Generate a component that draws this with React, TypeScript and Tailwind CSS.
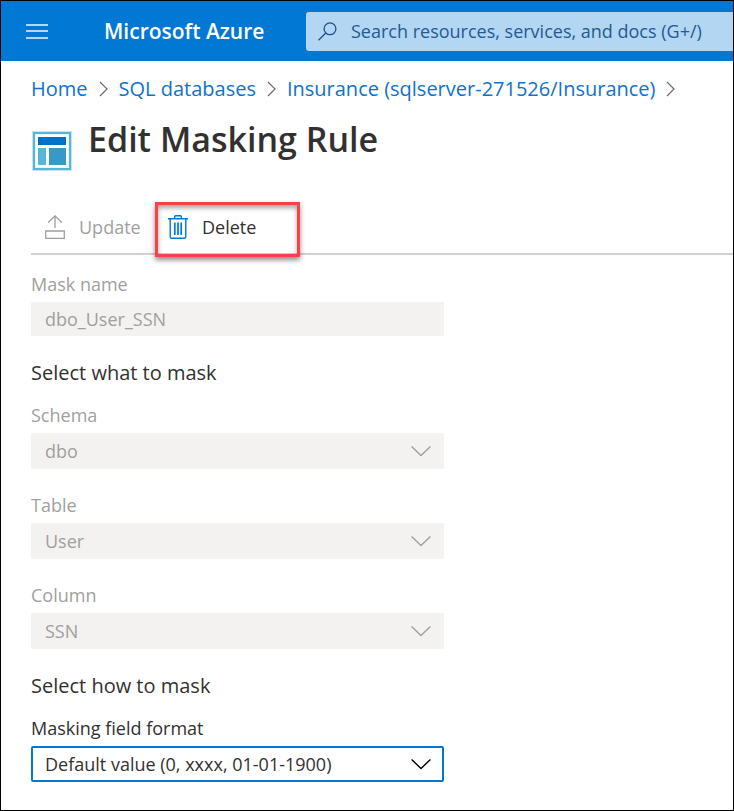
import type { ReactNode } from "react";

function ChevronRight() {
  return (
    <svg className="h-4 w-[9px] shrink-0" viewBox="0 0 9 16" fill="none" stroke="#6b6b6b" strokeWidth="1.2" aria-hidden="true">
      <path d="M1 1l7 7-7 7" />
    </svg>
  );
}

function ChevronDown() {
  return (
    <svg
      className="pointer-events-none absolute top-1/2 right-[13px] h-[11px] w-5 -translate-y-1/2"
      viewBox="0 0 20 11"
      fill="none"
      stroke="currentColor"
      strokeWidth="1.4"
      aria-hidden="true"
    >
      <path d="M.6 1l9.4 9 9.4-9" />
    </svg>
  );
}

function ResourceIcon() {
  return (
    <svg className="mt-3 h-10 w-10 shrink-0" viewBox="0 0 40 40" aria-hidden="true">
      <rect width="40" height="40" fill="#c5e3f1" />
      <rect x="1" y="1" width="38" height="38" fill="#59b4d9" />
      <rect x="3" y="3" width="34" height="34" fill="#e8f5fb" />
      <rect x="4" y="4" width="32" height="32" fill="#fff" />
      <rect x="6" y="6" width="28" height="8" fill="#0072c6" />
      <rect x="6" y="17" width="8" height="17" fill="#59b4d9" />
      <rect x="17" y="17" width="17" height="17" fill="#3999c6" />
    </svg>
  );
}

function UploadIcon() {
  return (
    <svg className="h-6 w-5" viewBox="0 0 20 24" fill="none" stroke="#a19f9d" strokeWidth="1.3" aria-hidden="true">
      <path d="M10 13V1M3.2 7.5L10 .9l6.800 6.600" />
      <path d="M.7 16h18.600v7.300H.7z" />
    </svg>
  );
}

function TrashIcon() {
  return (
    <svg className="h-6 w-5" viewBox="0 0 20 24" fill="none" stroke="#0078d4" strokeWidth="1.4" aria-hidden="true">
      <path d="M0 3.700h20M6.700 3.500V1.800Q6.700.8 7.700.8h4.600q1 0 1 1v1.700" />
      <path d="M2.200 4v17.800q0 1.500 1.500 1.500h12.600q1.500 0 1.500-1.500V4" />
      <path d="M6.800 7.500v12.500M10 7.500v12.500M13.200 7.500v12.500" strokeWidth="1.700" />
    </svg>
  );
}

function SelectField({ id, label, value, active = false }: { id: string; label: string; value: string; active?: boolean }) {
  return (
    <div className={active ? "text-[#323130]" : "text-[#a19f9d]"}>
      <label htmlFor={id} className="mb-1 block leading-7">
        {label}
      </label>
      <div className="relative">
        <select
          id={id}
          disabled={!active}
          className={
            active
              ? "block h-9 w-full appearance-none rounded-[2px] border-2 border-[#0078d4] bg-white pr-10 pl-3 text-[#323130] outline-none"
              : "block h-9 w-full appearance-none rounded-[2px] border-2 border-[#f3f2f1] bg-[#f3f2f1] pr-10 pl-3 text-[#a19f9d] opacity-100"
          }
        >
          <option>{value}</option>
        </select>
        <span className={active ? "text-black" : "text-[#a19f9d]"}>
          <ChevronDown />
        </span>
      </div>
    </div>
  );
}

function SectionTitle({ children }: { children: ReactNode }) {
  return <h2 className="pt-[23px] pb-3.5 text-[20px] leading-7 text-[#323130]">{children}</h2>;
}

export default function App() {
  return (
    <div className="min-h-screen overflow-hidden border border-black bg-white font-['Open_Sans','Noto_Sans',sans-serif] text-[18px] text-[#323130]">
      <header className="flex h-[60px] items-center bg-[#0078d4] pl-[25px]">
        <button type="button" aria-label="Show portal menu" className="flex h-[15px] w-[22px] flex-col justify-between">
          <span className="h-0.5 w-full bg-[#b5d7f3]" />
          <span className="h-0.5 w-full bg-[#b5d7f3]" />
          <span className="h-0.5 w-full bg-[#b5d7f3]" />
        </button>
        <a href="#" className="ml-14 w-[202px] shrink-0 pt-0.5 text-[21px] font-semibold whitespace-nowrap text-white">
          Microsoft Azure
        </a>
        <div className="flex h-[39px] min-w-0 flex-1 items-center rounded-l-[3px] bg-[#b3d6f2] pl-3">
          <svg className="h-[19px] w-[19px] shrink-0" viewBox="0 0 19 19" fill="none" stroke="#1d5288" strokeWidth="1.3" aria-hidden="true">
            <circle cx="12" cy="6.800" r="5.900" />
            <path d="M7.800 11L.5 18.300" />
          </svg>
          <input
            type="search"
            aria-label="Search resources, services, and docs"
            placeholder="Search resources, services, and docs (G+/)"
            className="ml-3.5 h-full min-w-0 flex-1 bg-transparent text-[18px] outline-none placeholder:text-[#245a91] placeholder:opacity-100"
          />
        </div>
      </header>

      <main className="pb-6 pl-[30px]">
        <nav aria-label="Breadcrumb" className="flex items-center gap-[11px] pt-3.5 text-[20px] leading-7 whitespace-nowrap text-[#0f72cc]">
          <a href="#">Home</a>
          <ChevronRight />
          <a href="#">SQL databases</a>
          <ChevronRight />
          <a href="#">Insurance (sqlserver-271526/Insurance)</a>
          <ChevronRight />
        </nav>

        <div className="flex items-start gap-4 pt-4 pl-px">
          <ResourceIcon />
          <h1 className="text-[34px] leading-10 font-semibold whitespace-nowrap">Edit Masking Rule</h1>
        </div>

        <div role="toolbar" aria-label="Rule actions" className="mt-8 flex h-[52px] items-center gap-3 border-b-2 border-[#d0d0d0] pl-3.5">
          <button type="button" disabled className="flex h-full w-[98px] items-center gap-3.5 pb-0.5 text-[#a19f9d]">
            <UploadIcon />
            Update
          </button>
          <button type="button" className="relative flex h-full w-[145px] items-center gap-3.5 pb-0.5 pl-[13px]">
            <TrashIcon />
            Delete
            <span className="pointer-events-none absolute inset-x-0 -top-px -bottom-1 border-3 border-[#fb4147] shadow-[0_3px_5px_rgba(0,0,0,0.45),inset_0_3px_5px_rgba(0,0,0,0.35)]" />
          </button>
        </div>

        <form className="w-full max-w-[413px] pt-[15px]">
          <div className="text-[#a19f9d]">
            <label htmlFor="mask-name" className="mb-1 block leading-7">
              Mask name
            </label>
            <input
              id="mask-name"
              type="text"
              disabled
              defaultValue="dbo_User_SSN"
              className="block h-[34px] w-full bg-[#f3f2f1] px-3.5 text-[#a19f9d]"
            />
          </div>
          <SectionTitle>Select what to mask</SectionTitle>
          <div className="flex flex-col gap-[22px]">
            <SelectField id="schema" label="Schema" value="dbo" />
            <SelectField id="table" label="Table" value="User" />
            <SelectField id="column" label="Column" value="SSN" />
          </div>
          <SectionTitle>Select how to mask</SectionTitle>
          <SelectField id="format" label="Masking field format" value="Default value (0, xxxx, 01-01-1900)" active />
        </form>
      </main>
    </div>
  );
}
